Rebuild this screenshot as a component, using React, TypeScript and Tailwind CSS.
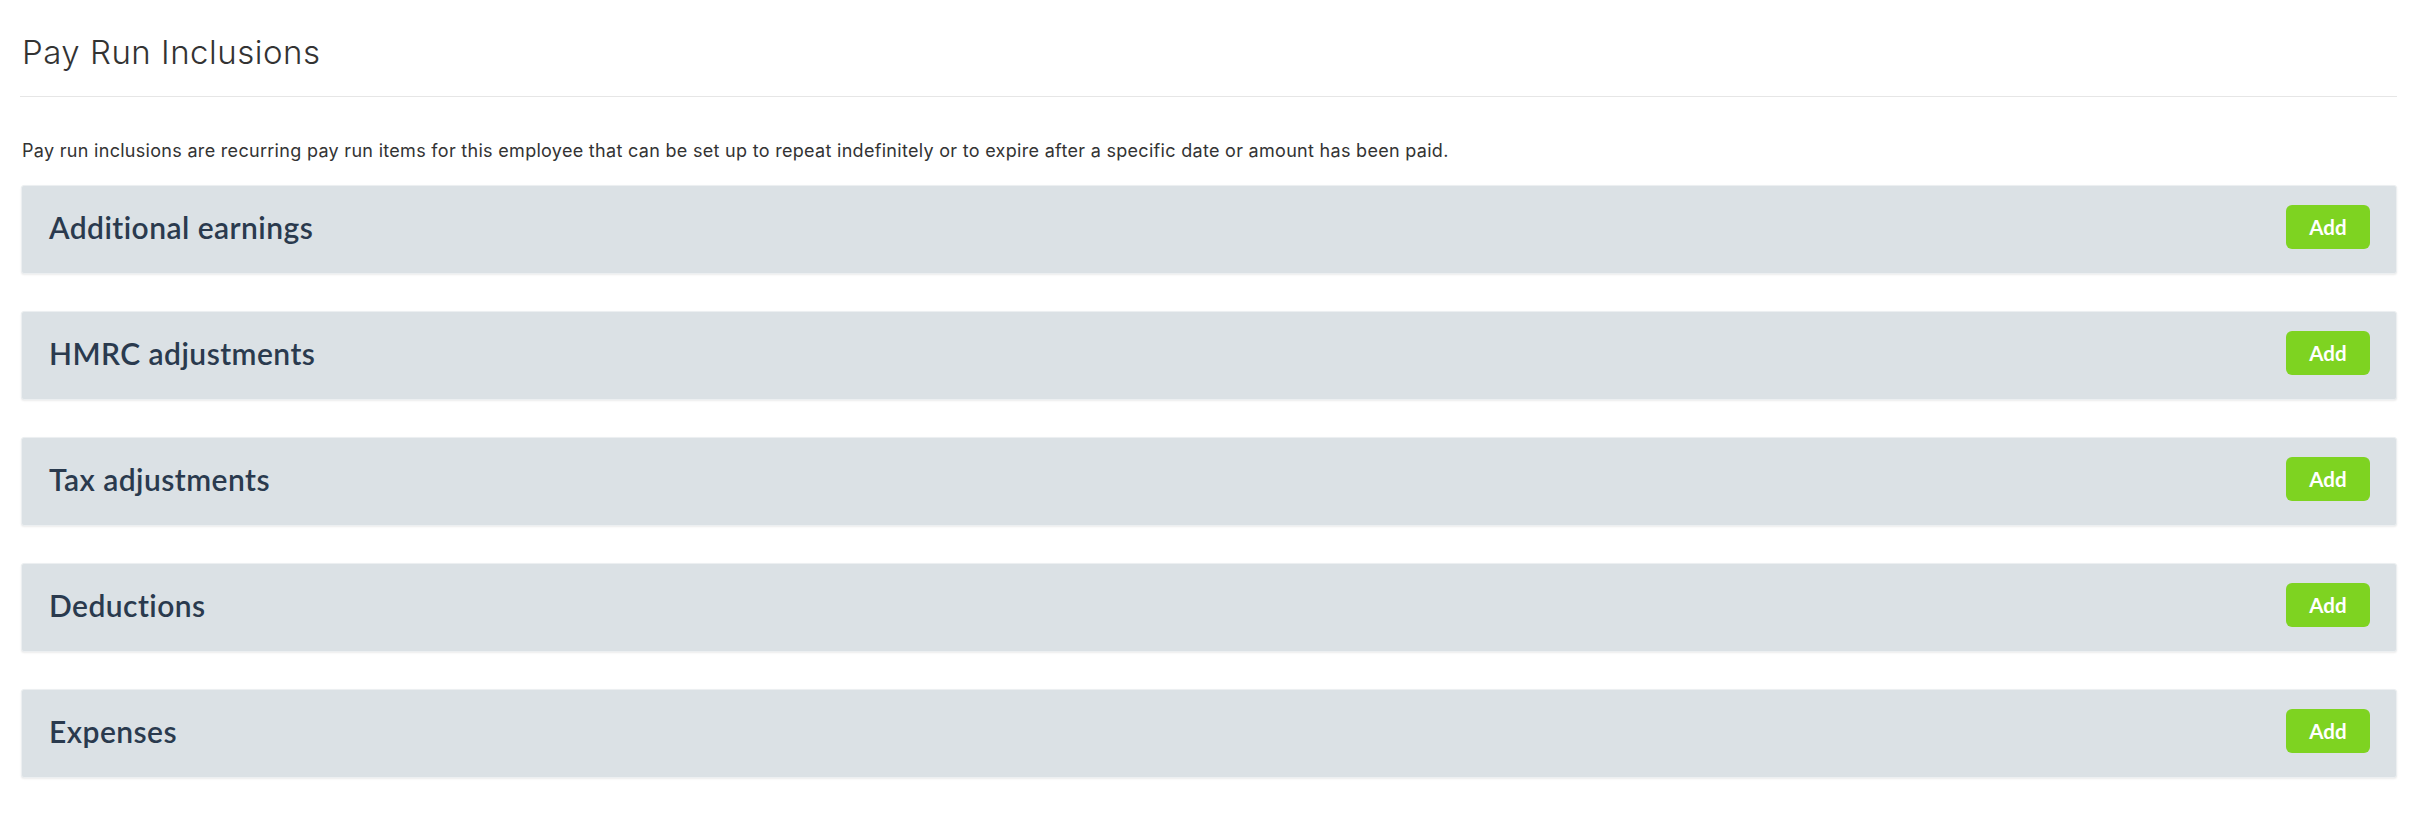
const SECTIONS = [
  'Additional earnings',
  'HMRC adjustments',
  'Tax adjustments',
  'Deductions',
  'Expenses',
]

function InclusionCard({ title }: { title: string }) {
  return (
    <div className="flex h-[89px] items-center justify-between rounded-[3px] border border-[#eceff1] bg-[#dbe1e5] pb-[5px] pl-[27px] pr-[26px] shadow-[0_1px_2px_rgba(0,0,0,0.08)]">
      <h3 className="font-['Lato',sans-serif] text-[30px] font-semibold leading-none tracking-[0.45px] text-[#2a3a4e]">
        {title}
      </h3>
      <button
        type="button"
        className="h-[44px] w-[84px] rounded-[6px] bg-[#7ed321] font-['Lato',sans-serif] text-[20.5px] font-bold text-white"
      >
        Add
      </button>
    </div>
  )
}

export default function App() {
  return (
    <div className="min-h-screen bg-white px-[20px] pt-[32px]">
      <h1 className="pl-[2px] font-['Inter',sans-serif] text-[33px] font-light leading-[40px] tracking-[0.5px] text-[#333333]">
        Pay Run Inclusions
      </h1>
      <div className="mt-[24px] border-t border-[#e6e6e6]" />
      <p className="mt-[42px] pl-[2px] font-['Inter',sans-serif] text-[18px] leading-[24px] tracking-[0.3px] text-[#333333]">
        Pay run inclusions are recurring pay run items for this employee that can be set up to repeat indefinitely or to
        expire after a specific date or amount has been paid.
      </p>
      <div className="mt-[22px] flex flex-col gap-[37px] pl-px">
        {SECTIONS.map(s => (
          <InclusionCard key={s} title={s} />
        ))}
      </div>
    </div>
  )
}
